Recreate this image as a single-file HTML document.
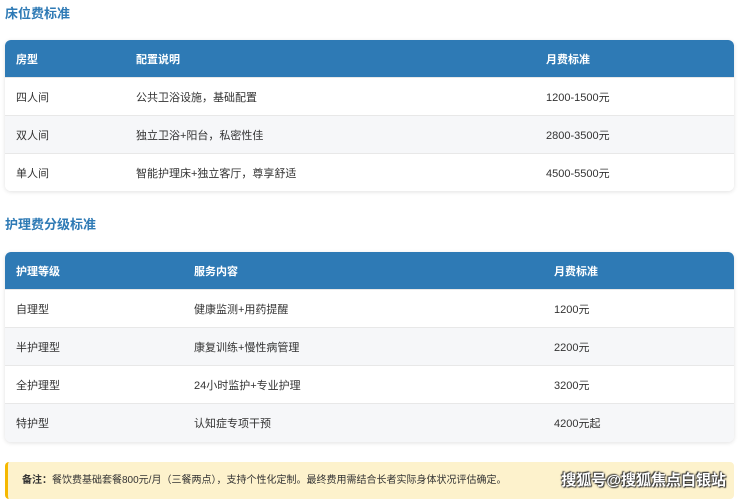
<!DOCTYPE html>
<html><head><meta charset="utf-8"><style>
*{margin:0;padding:0;box-sizing:border-box}
body{width:740px;height:499px;background:#fff;font-family:"Liberation Sans","Noto Sans CJK SC",sans-serif;position:relative;overflow:hidden;color:#333}
h2{position:absolute;left:5px;font-size:13px;font-weight:bold;color:#2e7ab5}
.t{position:absolute;left:5px;width:729px;border-radius:6px;overflow:hidden;box-shadow:0 1px 4px rgba(0,0,0,0.12)}
.r{height:38px;position:relative;font-size:11px;border-bottom:1px solid #e8e8e8}
.r span{position:absolute;top:1px;line-height:38px}
.h{background:#2e7ab5;color:#fff;font-weight:bold}
.g{background:#f6f7f9}
.w{background:#fff}
.note{position:absolute;left:5px;top:462px;width:729px;height:37px;background:#fdf2cc;border-left:3px solid #f5b800;border-radius:4px;font-size:10px;line-height:37px;padding-left:14px;color:#333}
.wm{position:absolute;right:14px;top:468px;font-size:15px;font-weight:bold;color:#fff;text-shadow:0 0 2px #333,1px 1px 1px #333,-1px -1px 1px #333;line-height:25px}
</style></head><body>
<h2 style="top:3px">床位费标准</h2>
<div class="t" style="top:40px">
<div class="r h"><span style="left:11px">房型</span><span style="left:131px">配置说明</span><span style="left:541px">月费标准</span></div>
<div class="r w"><span style="left:11px">四人间</span><span style="left:131px">公共卫浴设施，基础配置</span><span style="left:541px">1200-1500元</span></div>
<div class="r g"><span style="left:11px">双人间</span><span style="left:131px">独立卫浴+阳台，私密性佳</span><span style="left:541px">2800-3500元</span></div>
<div class="r w" style="height:37px;border:0"><span style="left:11px">单人间</span><span style="left:131px">智能护理床+独立客厅，尊享舒适</span><span style="left:541px">4500-5500元</span></div>
</div>
<h2 style="top:214px">护理费分级标准</h2>
<div class="t" style="top:252px">
<div class="r h"><span style="left:11px">护理等级</span><span style="left:189px">服务内容</span><span style="left:549px">月费标准</span></div>
<div class="r w"><span style="left:11px">自理型</span><span style="left:189px">健康监测+用药提醒</span><span style="left:549px">1200元</span></div>
<div class="r g"><span style="left:11px">半护理型</span><span style="left:189px">康复训练+慢性病管理</span><span style="left:549px">2200元</span></div>
<div class="r w"><span style="left:11px">全护理型</span><span style="left:189px">24小时监护+专业护理</span><span style="left:549px">3200元</span></div>
<div class="r g" style="border:0"><span style="left:11px">特护型</span><span style="left:189px">认知症专项干预</span><span style="left:549px">4200元起</span></div>
</div>
<div class="note"><b>备注：</b>餐饮费基础套餐800元/月（三餐两点），支持个性化定制。最终费用需结合长者实际身体状况评估确定。</div>
<div class="wm">搜狐号@搜狐焦点白银站</div>
</body></html>
